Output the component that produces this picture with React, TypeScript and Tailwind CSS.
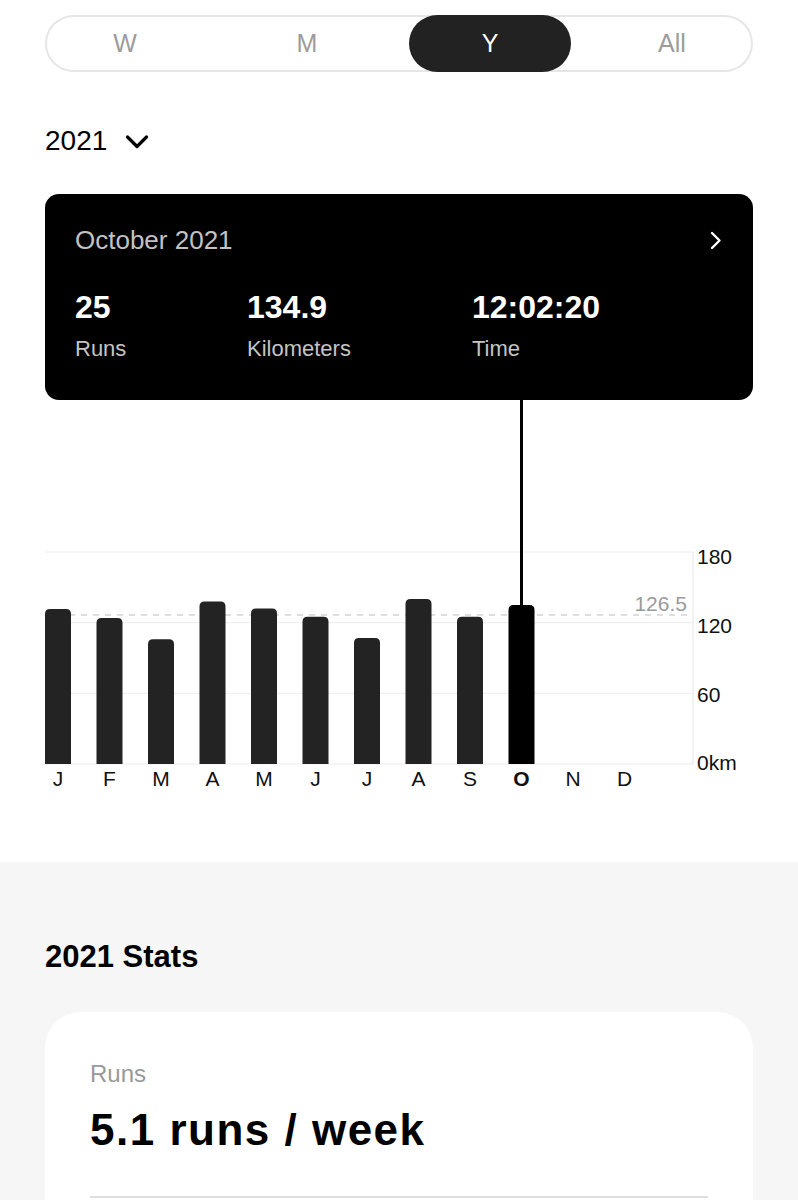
import React from "react";

const months = ["J", "F", "M", "A", "M", "J", "J", "A", "S", "O", "N", "D"];
const values = [131.6, 124, 106, 138, 132, 125, 107, 140, 125, 134.9];
const selected = 9;

// chart geometry (svg coords)
const base = 364;
const pxPerKm = 212 / 180;
const left = 45;
const right = 693;
const step = 51.5;
const barW = 26;

const y = (v: number) => base - v * pxPerKm;

function barPath(x: number, top: number, w: number, r: number) {
  return `M${x},${base} L${x},${top + r} Q${x},${top} ${x + r},${top} L${x + w - r},${top} Q${x + w},${top} ${x + w},${top + r} L${x + w},${base} Z`;
}

function Chart() {
  const selX = left + selected * step + barW / 2;
  return (
    <svg width={798} height={400} className="block" style={{ fontFamily: '"Liberation Sans", Arial, sans-serif' }}>
      {[180, 120, 60, 0].map((v) => (
        <line key={v} x1={left} x2={right} y1={y(v)} y2={y(v)} stroke="#ececec" strokeWidth={1} />
      ))}
      <line x1={right} x2={right} y1={y(180)} y2={base} stroke="#e6e6e6" strokeWidth={1} />
      <line x1={left} x2={right} y1={y(126.5)} y2={y(126.5)} stroke="#bdbdbd" strokeWidth={1} strokeDasharray="6 6" />
      <text x={687} y={210.5} textAnchor="end" fontSize={21} fill="#9a9a9a">126.5</text>

      {values.map((v, i) => (
        <path key={i} d={barPath(left + i * step, y(v), barW, 5)} fill={i === selected ? "#000" : "#232323"} />
      ))}
      <line x1={selX} x2={selX} y1={0} y2={y(values[selected]) + 2} stroke="#000" strokeWidth={3} />

      {[
        ["180", 164],
        ["120", 233],
        ["60", 302],
        ["0km", 370],
      ].map(([t, yy]) => (
        <text key={t} x={697} y={yy} fontSize={21} fill="#111">{t}</text>
      ))}

      {months.map((m, i) => (
        <text
          key={i}
          x={left + i * step + 13}
          y={386}
          textAnchor="middle"
          fontSize={21}
          fontWeight={i === selected ? 700 : 400}
          fill="#111"
        >
          {m}
        </text>
      ))}
    </svg>
  );
}

export default function App() {
  return (
    <div className="min-h-[1400px] bg-white font-['Liberation_Sans',Arial,sans-serif] text-[#111]">
      {/* period switch */}
      <div className="pt-[15px] px-[45px]">
        <div className="grid h-[57px] grid-cols-[160px_204px_162px_1fr] rounded-full shadow-[inset_0_0_0_2px_#e6e6e6] text-[25px] leading-none">
          <div className="flex items-center justify-center text-[#9c9c9c]">W</div>
          <div className="flex items-center justify-center text-[#9c9c9c]">M</div>
          <div className="flex items-center justify-center rounded-full bg-[#222] text-white">Y</div>
          <div className="flex items-center justify-center pl-5 text-[#9c9c9c]">All</div>
        </div>
      </div>

      {/* year picker */}
      <div className="mt-[52px] flex items-center px-[45px] text-[28px] leading-[34px] text-black">
        <span>2021</span>
        <svg width="24" height="16" viewBox="0 0 24 16" className="ml-[18px] mt-[2px]">
          <path d="M2.5 3 L12 12.5 L21.5 3" fill="none" stroke="#000" strokeWidth="3.2" strokeLinecap="round" strokeLinejoin="round" />
        </svg>
      </div>

      {/* month summary */}
      <div className="mx-[45px] mt-[36px] h-[206px] rounded-[14px] bg-black px-[30px] pt-[30px]">
        <div className="flex items-center justify-between">
          <span className="text-[26px] leading-[32px] text-[#c2c2c2]">October 2021</span>
          <svg width="12" height="19" viewBox="0 0 12 19" className="mr-[1px]">
            <path d="M2 2 L9.5 9.5 L2 17" fill="none" stroke="#fff" strokeWidth="2.4" strokeLinecap="round" strokeLinejoin="round" />
          </svg>
        </div>
        <div className="mt-[32px] grid grid-cols-[172px_225px_1fr]">
          {[
            ["25", "Runs"],
            ["134.9", "Kilometers"],
            ["12:02:20", "Time"],
          ].map(([v, l]) => (
            <div key={l}>
              <div className="text-[32px] font-bold leading-[38px] text-white">{v}</div>
              <div className="mt-[10px] text-[22px] leading-[26px] text-[#c4c4c4]">{l}</div>
            </div>
          ))}
        </div>
      </div>

      <Chart />

      {/* stats */}
      <div className="mt-[62px] bg-[#f6f6f6] px-[45px] pt-[77px] pb-10">
        <h2 className="text-[31px] font-bold leading-[36px] text-black">2021 Stats</h2>
        <div className="mt-[37px] rounded-[36px] bg-white px-[45px] pt-[48px] pb-[120px]">
          <div className="text-[24px] leading-[28px] text-[#999]">Runs</div>
          <div className="mt-[17px] text-[44px] font-bold leading-[50px] tracking-[1.5px] text-black">5.1 runs / week</div>
          <div className="mt-[41px] h-[2px] bg-[#dedede]" />
        </div>
      </div>
    </div>
  );
}
